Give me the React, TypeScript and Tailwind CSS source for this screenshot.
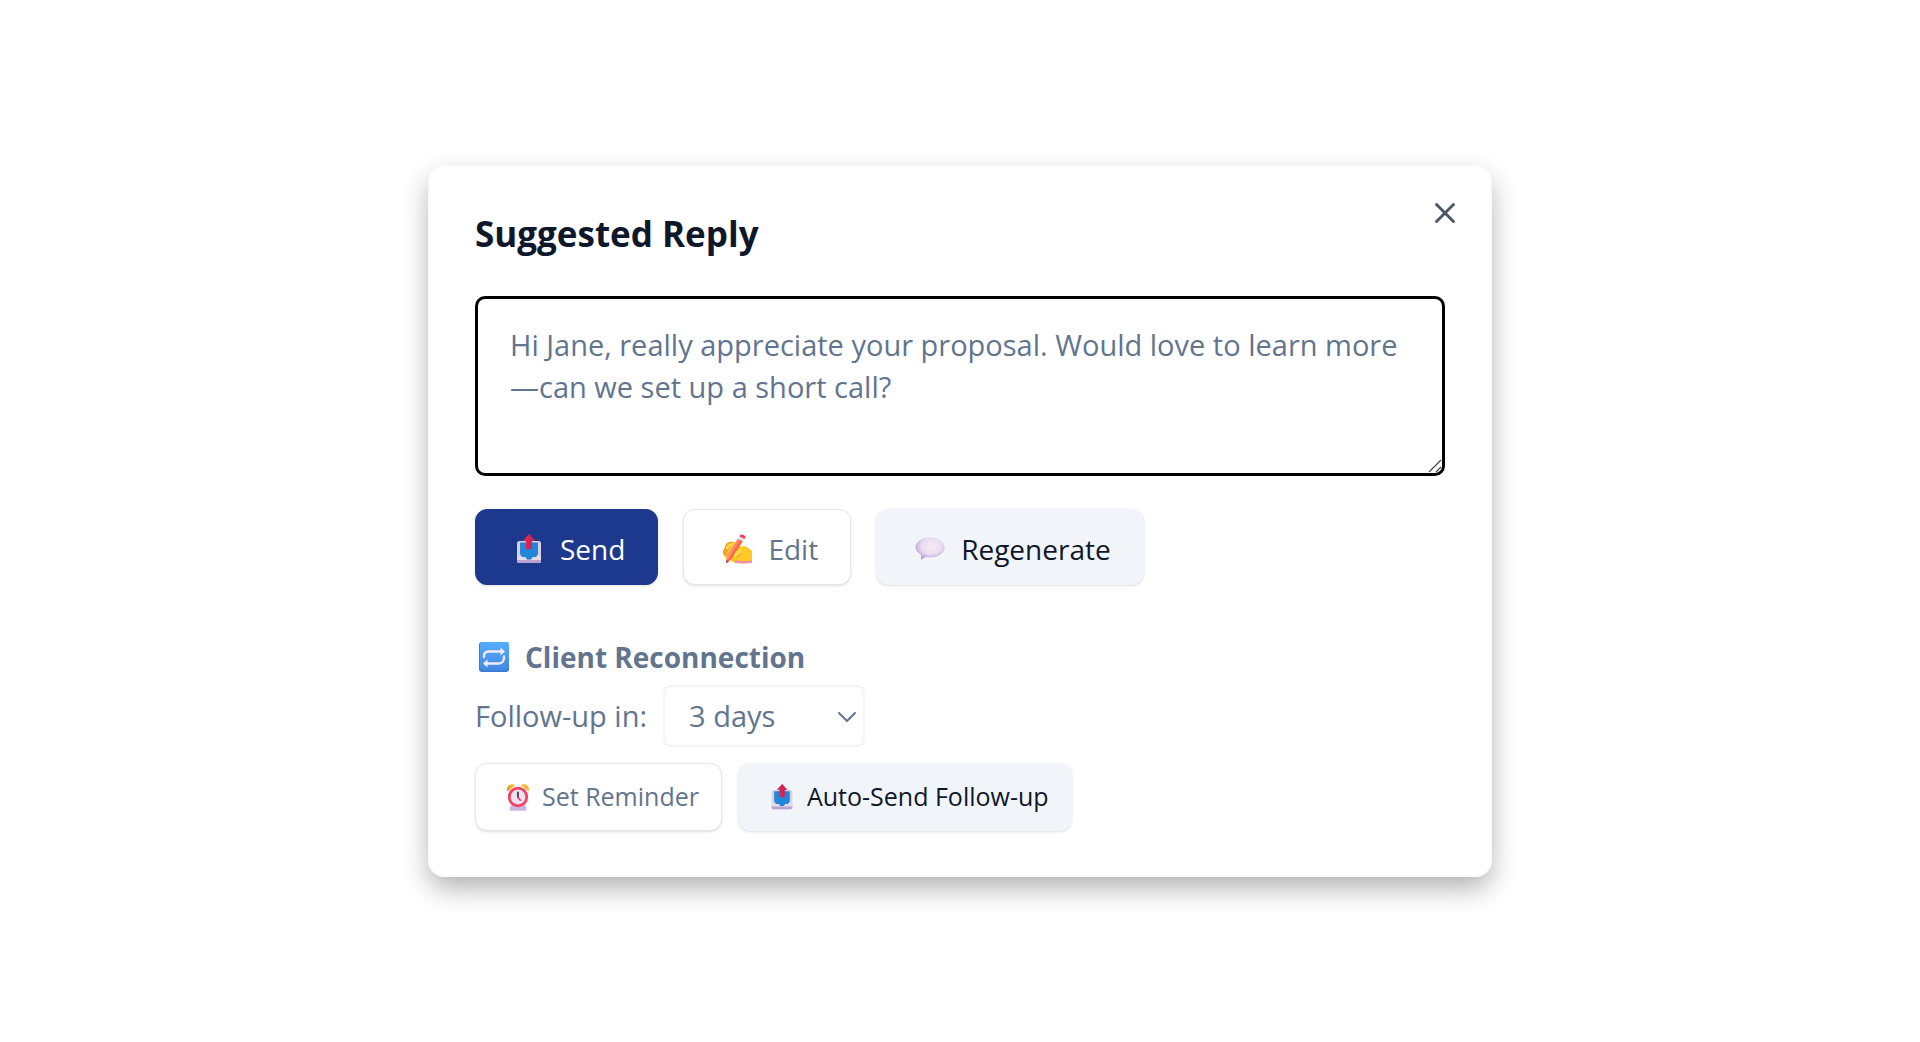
import type { ReactNode } from 'react';
import { X, ChevronDown } from 'lucide-react';

function OutboxIcon({ className }: { className: string }) {
  return (
    <svg viewBox="0 0 30 30" className={className} aria-hidden="true">
      <rect x="3" y="7" width="24" height="22" rx="2.5" fill="#d9cfe6" />
      <path d="M6 8.500h18V20l-2 3h-3.500L17 25.500h-4L11.500 23H8l-2-3z" fill="#2486d8" />
      <path d="M3 20.500l5.500 3h2.500l2.500 3h3l2.500-3h2.500l5.500-3V27a2 2 0 0 1-2 2H5a2 2 0 0 1-2-2z" fill="#e4dcec" />
      <path d="M3 26h24v1a2 2 0 0 1-2 2H5a2 2 0 0 1-2-2z" fill="#b9a3d3" />
      <path d="M15 0l6 6.500h-3V15h-6V6.500H9z" fill="#e0244f" />
      <path d="M15 0l6 6.500h-3V15h-3z" fill="#c4285c" />
    </svg>
  );
}

function WritingIcon({ className }: { className: string }) {
  return (
    <svg viewBox="0 0 30 30" className={className} aria-hidden="true">
      <path d="M1 18c0-2 1-3 2-4-.500-3 2-5.500 5-6 2-.500 4 0 6 1l3 4c3-1 6-1 8 0 2 1 3 3 5 4v11l-4 1H15c-3 0-5-1-7-3l-5-3c-1.500-1-2-3-2-5z" fill="#ffc928" />
      <path d="M1 18c0-2 1-3 2-4-.500-3 2-5.500 5-6 1.500-.400 3-.200 4 .200-3 1.800-5 4.800-6 8.800l-2 5c-2-1-3-2-3-4z" fill="#f2a32b" />
      <path d="M5 14c1-2.500 4-4 7-4" fill="none" stroke="#ffd84a" strokeWidth="2.500" strokeLinecap="round" />
      <path d="M13 25.500c5 2.500 12 1.500 17 1v2c-4 1-12 1.500-17 .300z" fill="#f58ca4" />
      <path d="M16 4.500l5 2.500L9.500 25 4 29.500 5 22z" fill="#ff6a40" />
      <path d="M16 4.500l2 1L7 24l-3 5.500L5 22z" fill="#ff9070" />
      <path d="M17.500 2.500l5 2.500-1.500 2.500-5-2.500z" fill="#eadff0" />
      <path d="M18.500.800c1-1.300 5.500.700 5 2.700l-1 1.500-5-2.500z" fill="#ee425e" />
      <path d="M4.500 26l2.500 1.200L4 29.500z" fill="#8f4864" />
      <path d="M12 21c1-3 4-6 7-6 2 0 2 2 0 3l-4 4c-1 1.500-3.500 1-3-1z" fill="#ffd944" />
      <path d="M14 23c2 0 3-2 5-3" fill="none" stroke="#e99a2c" strokeWidth="1" strokeLinecap="round" />
    </svg>
  );
}

function SpeechIcon({ className }: { className: string }) {
  return (
    <svg viewBox="0 0 30 30" className={className} aria-hidden="true">
      <defs>
        <radialGradient id="bubble" cx="0.55" cy="0.4" r="0.6">
          <stop offset="0" stopColor="#f7edf7" />
          <stop offset="0.6" stopColor="#eadcef" />
          <stop offset="1" stopColor="#b9a0d8" />
        </radialGradient>
      </defs>
      <path d="M15 3.500c8 0 14.500 4.300 14.500 10s-6.500 10-14.500 10c-2 0-3.500-.300-5 0l-3.500 2c-.800 0-.800-.500-.500-1.500V20.500c-3-2-5.500-4-5.500-7 0-5.700 6.500-10 14.500-10z" fill="url(#bubble)" />
    </svg>
  );
}

function RepeatIcon({ className }: { className: string }) {
  return (
    <svg viewBox="0 0 30 30" className={className} aria-hidden="true">
      <defs>
        <linearGradient id="tile" x1="0" y1="0" x2="0" y2="1">
          <stop offset="0" stopColor="#55adff" />
          <stop offset="1" stopColor="#4089e2" />
        </linearGradient>
      </defs>
      <rect width="30" height="30" rx="3" fill="#3b78cf" />
      <rect x="1" width="29" height="28.500" rx="3" fill="url(#tile)" />
      <g fill="none" stroke="#f1ebfa" strokeWidth="2.400" strokeLinecap="round" strokeLinejoin="round">
        <path d="M5 15v-1c0-3 2-4.500 5-4.500h13" />
        <path d="M25 14.500v1c0 3.500-2 6-5 6H7" />
      </g>
      <path d="M21.500 5.500L26 9.500l-4.500 4zM8.500 17.500L4 21.500l4.500 4z" fill="#f1ebfa" />
    </svg>
  );
}

function AlarmIcon({ className }: { className: string }) {
  return (
    <svg viewBox="0 0 26 30" className={className} aria-hidden="true">
      <path d="M4 25.500l3-2h12l3 2V30H4z" fill="#cdb4e6" />
      <path d="M1.500 9C0 4 4-1 10 2z" fill="#ffb52e" />
      <path d="M24.500 9C26 4 22-1 16 2z" fill="#ffb52e" />
      <path d="M1.500 9C.500 6 2 3.500 4 2.500L4.500 6z" fill="#e89a2c" />
      <circle cx="13" cy="15" r="9.500" fill="#ece3f1" stroke="#fa3e60" strokeWidth="3" />
      <path d="M13 10v5.500" stroke="#342849" strokeWidth="1.800" strokeLinecap="round" />
      <path d="M13 15.500l2.500 3" stroke="#f03a5c" strokeWidth="1.800" strokeLinecap="round" />
    </svg>
  );
}

const variants = {
  primary: 'border-blue-900 bg-blue-900 text-white',
  outline: 'border-slate-200 bg-white text-slate-500',
  secondary: 'border-slate-100 bg-slate-100 text-slate-900',
};

const sizes = {
  md: 'h-[76px] gap-4 pt-1 pr-8 pl-[38px] text-[28px]',
  sm: 'h-[68px] gap-3 pr-[22px] pl-[30px] text-[25px]',
};

type ActionButtonProps = {
  variant: keyof typeof variants;
  size?: keyof typeof sizes;
  icon: ReactNode;
  children: ReactNode;
};

function ActionButton({ variant, size = 'md', icon, children }: ActionButtonProps) {
  return (
    <button
      type="button"
      className={`flex items-center justify-center rounded-xl border shadow-sm ${sizes[size]} ${variants[variant]}`}
    >
      {icon}
      {children}
    </button>
  );
}

export default function App() {
  return (
    <main className="flex min-h-screen items-center justify-center bg-white font-['Open_Sans','Noto_Sans',sans-serif]">
      <section className="relative w-full max-w-[1064px] rounded-2xl border-2 border-slate-50 bg-white px-[45px] pt-[45px] pb-11 shadow-[0_12px_28px_-2px_rgba(0,0,0,0.33)]">
        <button type="button" aria-label="Close" className="absolute top-[29px] right-7 text-gray-600">
          <X className="size-[34px]" strokeWidth={2} />
        </button>

        <h2 className="mb-10 text-[35px] leading-11 font-bold text-slate-900">Suggested Reply</h2>

        <div className="relative mb-[33px]">
          <textarea
            aria-label="Suggested reply"
            defaultValue="Hi Jane, really appreciate your proposal. Would love to learn more—can we set up a short call?"
            className="block h-[180px] w-full resize-none rounded-[10px] border-[3px] border-black bg-white px-8 py-[25px] text-[29px] leading-[42px] text-slate-500 outline-none"
          />
          <svg viewBox="0 0 14 14" className="pointer-events-none absolute right-[3px] bottom-[3px] size-3.5" aria-hidden="true">
            <path d="M1 13L13 1M8 13l5-5" stroke="#444" strokeWidth="1.200" />
          </svg>
        </div>

        <div className="mb-12 flex flex-wrap gap-[25px]">
          <ActionButton variant="primary" icon={<OutboxIcon className="size-[30px]" />}>Send</ActionButton>
          <ActionButton variant="outline" icon={<WritingIcon className="size-[30px]" />}>Edit</ActionButton>
          <ActionButton variant="secondary" icon={<SpeechIcon className="size-[30px]" />}>Regenerate</ActionButton>
        </div>

        <h3 className="mb-1 flex items-center gap-4 pl-1 text-[28px] leading-12 font-bold text-slate-500">
          <RepeatIcon className="size-[30px]" />
          Client Reconnection
        </h3>

        <div className="mb-4 flex items-center gap-4 text-[29px] text-slate-500">
          <label htmlFor="follow-up">Follow-up in:</label>
          <div className="relative">
            <select
              id="follow-up"
              defaultValue="3"
              className="block h-[62px] w-[202px] appearance-none rounded-lg border-2 border-gray-100 bg-white px-6"
            >
              <option value="3">3 days</option>
              <option value="5">5 days</option>
              <option value="7">7 days</option>
            </select>
            <ChevronDown className="pointer-events-none absolute top-4 right-0.5 size-8" strokeWidth={1.5} />
          </div>
        </div>

        <div className="flex flex-wrap gap-4">
          <ActionButton variant="outline" size="sm" icon={<AlarmIcon className="h-7 w-6" />}>Set Reminder</ActionButton>
          <ActionButton variant="secondary" size="sm" icon={<OutboxIcon className="size-[26px]" />}>Auto-Send Follow-up</ActionButton>
        </div>
      </section>
    </main>
  );
}
